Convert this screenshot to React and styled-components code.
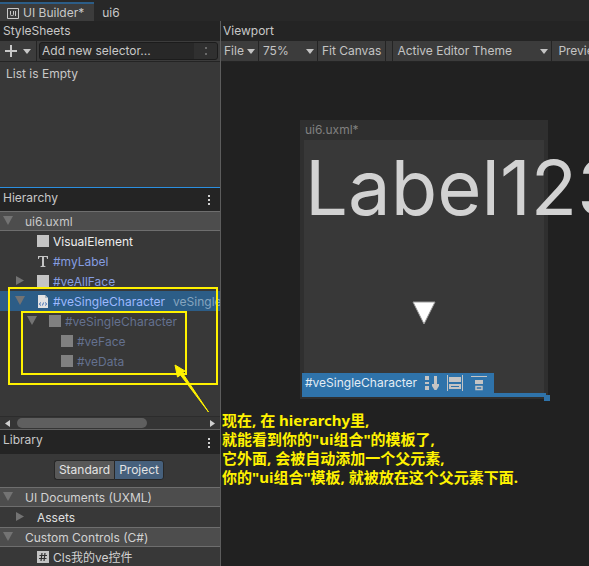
import React from "react";
import styled, { createGlobalStyle } from "styled-components";

const Global = createGlobalStyle`
  *, *::before, *::after { box-sizing: border-box; }
  body {
    margin: 0;
    background: #212121;
    color: #c8c8c8;
    font: 400 12px/20px Inter, "Noto Sans CJK SC", sans-serif;
    overflow: hidden;
  }
  button, input, select { font: inherit; color: inherit; margin: 0; padding: 0; border: 0; background: none; }
  ul { list-style: none; margin: 0; padding: 0; }
  svg { display: block; flex: none; }
`;

const Editor = styled.div`
  display: flex;
  flex-direction: column;
  height: 100vh;
`;

const TabBar = styled.div`
  display: flex;
  flex: 0 0 21px;
  line-height: 16px;
  background: #282828;
`;

const Tab = styled.button`
  display: flex;
  align-items: center;
  gap: 4px;
  line-height: 16px;
  padding: ${(p) => (p.$active ? "1px 10px 0 7px" : "5px 8px 0")};
  background: ${(p) => (p.$active ? "#3c3c3c" : "transparent")};
  border-top: ${(p) => (p.$active ? "2px solid #2c5d87" : "0")};
  margin-top: ${(p) => (p.$active ? "2px" : "0")};
`;

const Workspace = styled.div`
  display: flex;
  flex: 1;
  min-height: 0;
`;

const Sidebar = styled.aside`
  flex: 0 0 221px;
  display: grid;
  grid-template-rows: 167fr 242fr 136fr;
  min-height: 0;
  border-right: 1px solid #5c5c5c;
`;

const Pane = styled.section`
  display: flex;
  flex-direction: column;
  min-width: 0;
  min-height: 0;
  overflow: hidden;
  background: #383838;
  border-bottom: ${(p) => (p.$edge ? `1px solid ${p.$edge}` : "0")};
`;

const PaneHeader = styled.header`
  display: flex;
  justify-content: space-between;
  flex: 0 0 ${(p) => p.$height || 20}px;
  padding: 0 10px 0 ${(p) => p.$pad || 3}px;
  background: #242424;
`;

const PaneTitle = styled.h2`
  margin: 0;
  font: inherit;
`;

const IconButton = styled.button`
  display: flex;
  align-items: center;
  justify-content: center;
`;

const MenuButton = styled(IconButton)`
  padding-top: 1px;
`;

const Toolbar = styled.div`
  display: flex;
  flex: 0 0 21px;
  background: #3c3c3c;
  border-bottom: 1px solid #242424;
`;

const AddButton = styled(IconButton)`
  flex: 0 0 37px;
  gap: 6px;
  border-right: 1px solid #242424;
`;

const SelectorField = styled.div`
  display: flex;
  flex: 1;
  min-width: 0;
  margin: 1px 2px;
  background: #282828;
  border: 1px solid #1c1c1c;
  border-radius: 3px;
  overflow: hidden;
`;

const SelectorInput = styled.input`
  flex: 1;
  min-width: 0;
  padding-left: 2px;
  line-height: 16px;
  &::placeholder { color: #c8c8c8; opacity: 1; }
`;

const FieldMenu = styled(IconButton)`
  flex: 0 0 23px;
  background: #303030;
  color: #6a6a6a;
`;

const EmptyText = styled.p`
  margin: 0;
  padding: 2px 6px;
`;

const TreeArea = styled.div`
  position: relative;
  flex: 1;
  min-height: 0;
`;

const Tree = styled.ul``;

const TreeRow = styled.li`
  display: flex;
  align-items: center;
  height: 20px;
  padding-left: ${(p) => p.$depth * 12 + 3}px;
  line-height: 18px;
  white-space: nowrap;
  overflow: hidden;
  color: ${(p) => p.$color || "#d2d2d2"};
  background: ${(p) => (p.$head ? "#4d4d4d" : p.$selected ? "#2c5d87" : "transparent")};
  border: solid #6e6e6e;
  border-width: ${(p) => (p.$head ? "1px 0" : "0")};
`;

const RowText = styled.span`
  padding-top: 2px;
`;

const Toggle = styled(IconButton)`
  flex: 0 0 10px;
  height: 14px;
  margin-right: 12px;
  color: #737373;
`;

const ToggleGap = styled.span`
  flex: 0 0 22px;
`;

const NodeIcon = styled.span`
  display: flex;
  justify-content: center;
  flex: 0 0 12px;
  margin-right: 4px;
`;

const Swatch = styled.span`
  width: 12px;
  height: 12px;
  background: ${(p) => (p.$dim ? "#808080" : "#c4c4c4")};
`;

const Source = styled(RowText)`
  margin-left: 8px;
  color: #86a5bf;
`;

const ScrollBar = styled.div`
  display: flex;
  align-items: center;
  flex: 0 0 13px;
  padding: 0 5px;
  gap: 7px;
  background: #353535;
  border-top: 1px solid #2c2c2c;
`;

const ScrollTrack = styled.div`
  flex: 1;
`;

const ScrollThumb = styled.div`
  width: 70%;
  height: 10px;
  border-radius: 5px;
  background: #5f5f5f;
`;

const Segments = styled.div`
  display: flex;
  justify-content: center;
  padding: 6px 0 7px;
  margin-right: 2px;
  flex: none;
`;

const Segment = styled.button`
  height: 20px;
  padding: 0 4px;
  line-height: 18px;
  color: #e4e4e4;
  background: ${(p) => (p.$active ? "#46607c" : "#585858")};
  border: 1px solid #272727;
  border-radius: ${(p) => (p.$active ? "0 3px 3px 0" : "3px 0 0 3px")};
  border-right-width: ${(p) => (p.$active ? "1px" : "0")};
`;

const Callout = styled.div`
  position: absolute;
  left: ${(p) => p.$x}px;
  top: ${(p) => p.$y}px;
  width: ${(p) => p.$w}px;
  height: ${(p) => p.$h}px;
  border: 2px solid #fff200;
  pointer-events: none;
`;

const CalloutArrow = styled.svg`
  position: absolute;
  left: 172px;
  top: 152px;
  z-index: 1;
  pointer-events: none;
`;

const Viewport = styled.main`
  position: relative;
  display: flex;
  flex-direction: column;
  flex: 1;
  min-width: 0;
  overflow: hidden;
`;

const ViewBar = styled(Toolbar)`
  overflow: hidden;
  color: #c4c4c4;
`;

const ToolButton = styled.button`
  display: flex;
  align-items: center;
  flex: none;
  gap: 3px;
  padding: 0 ${(p) => p.$pad || 4}px;
  white-space: nowrap;
  border-right: 1px solid #242424;
`;

const ToolGap = styled.span`
  flex: 0 0 7px;
  border-right: 1px solid #242424;
`;

const SelectBox = styled.label`
  display: flex;
  align-items: center;
  flex: 0 0 ${(p) => p.$width}px;
  padding-right: 3px;
  border-right: 1px solid #242424;
`;

const Select = styled.select`
  appearance: none;
  flex: 1;
  min-width: 0;
  padding-left: 4px;
  outline: 0;
`;

const Stage = styled.div`
  flex: 1;
  padding: 58px 0 0 79px;
`;

const Document = styled.div`
  width: 248px;
  padding: 0 4px 5px;
  background: #2f2f2f;
`;

const DocumentTitle = styled.div`
  padding-left: 1px;
  color: #808080;
`;

const DocumentBody = styled.div`
  position: relative;
  display: flex;
  flex-direction: column;
  height: 254px;
  background: #383838;
`;

const BigLabel = styled.div`
  padding-left: 1px;
  font-size: 76px;
  line-height: 94px;
  white-space: nowrap;
  color: #d2d2d2;
`;

const Pointer = styled.svg`
  margin: 67px 0 0 108px;
`;

const Selection = styled.div`
  position: absolute;
  left: -2px;
  right: -2px;
  bottom: -3px;
  border-bottom: 4px solid #2f73aa;
`;

const SelectionTag = styled.div`
  display: flex;
  align-items: center;
  gap: 8px;
  width: 192px;
  height: 20px;
  padding-left: 3px;
  color: #e3edf5;
  background: #2f73aa;
`;

const Handle = styled.span`
  position: absolute;
  right: -4px;
  bottom: -8px;
  width: 6px;
  height: 6px;
  background: #2f73aa;
`;

const Note = styled.p`
  position: absolute;
  left: 1px;
  top: 390px;
  margin: 0;
  font: 700 15px/19px "Noto Sans", "Noto Sans CJK SC", sans-serif;
  white-space: nowrap;
  color: #fff200;
`;

const Down = () => (
  <svg width="8" height="5" viewBox="0 0 8 5">
    <path d="M0 0h8L4 5z" fill="currentColor" />
  </svg>
);

const Side = ({ flip }) => (
  <svg width="5" height="7" viewBox="0 0 5 7">
    <path d={flip ? "M5 0v7L0 3.5z" : "M0 0v7l5-3.5z"} fill="#d0d0d0" />
  </svg>
);

const Expander = ({ open, name }) => (
  <Toggle aria-label={`Toggle ${name}`} aria-expanded={open}>
    <svg width="10" height="10" viewBox="0 0 10 10">
      <path d={open ? "M0 0h10L5 9z" : "M1 0v9l8-4.5z"} fill="currentColor" />
    </svg>
  </Toggle>
);

const Dots = () => (
  <svg width="2" height="10" viewBox="0 0 2 10" fill="#d0d0d0">
    <path d="M0 0h2v2H0zM0 4h2v2H0zM0 8h2v2H0z" />
  </svg>
);

const TextIcon = () => (
  <svg width="10" height="11" viewBox="0 0 10 11">
    <path d="M0 0h10v3h-.8L8.500 1H6v8.800l1.500.5v.7h-5v-.7L4 9.800V1H1.500L.8 3H0z" fill="#c4c4c4" />
  </svg>
);

const FileIcon = () => (
  <svg width="10" height="13" viewBox="0 0 10 13">
    <path d="M0 0h7l3 3v10H0z" fill="#e2e2e2" />
    <path d="M7 0v3h3" fill="#aab6c0" />
    <path d="M3 7.500L1.200 9 3 10.500M7 7.500L8.800 9 7 10.500M5.600 7.500l-1.200 3" stroke="#3f6fb5" fill="none" />
  </svg>
);

const HashIcon = () => (
  <svg width="12" height="12" viewBox="0 0 12 12">
    <rect width="12" height="12" fill="#c4c4c4" />
    <path d="M5 2L4 10M8 2L7 10M2.500 4.500h7.500M2 7.500h7.500" stroke="#303030" strokeWidth="1.200" />
  </svg>
);

const BuilderIcon = () => (
  <svg width="12" height="11" viewBox="0 0 12 11" fill="none" stroke="#c8c8c8">
    <path d="M.5.5h11v10H.5z" />
    <path d="M3.500 3v3.500q0 1 1 1h1q1 0 1-1V3M8.500 3v5" />
  </svg>
);

const icons = {
  box: <Swatch />,
  dim: <Swatch $dim />,
  text: <TextIcon />,
  file: <FileIcon />,
  hash: <HashIcon />,
};

const BLUE = "#859de0";
const FADED = "#64718f";

const hierarchy = [
  { name: "ui6.uxml", depth: 0, open: true, head: true, color: "#c8c8c8" },
  { name: "VisualElement", depth: 1, icon: "box", color: "#eeeeee" },
  { name: "#myLabel", depth: 1, icon: "text", color: BLUE },
  { name: "#veAllFace", depth: 1, icon: "box", open: false, color: BLUE },
  { name: "#veSingleCharacter", depth: 1, icon: "file", open: true, selected: true, color: "#9db9ff", source: "veSingleCharacter" },
  { name: "#veSingleCharacter", depth: 2, icon: "dim", open: true, color: FADED },
  { name: "#veFace", depth: 3, icon: "dim", color: FADED },
  { name: "#veData", depth: 3, icon: "dim", color: FADED },
];

const library = [
  { name: "UI Documents (UXML)", depth: 0, open: true, head: true },
  { name: "Assets", depth: 1, open: false, color: "#e0e0e0" },
  { name: "Custom Controls (C#)", depth: 0, open: true, head: true },
  { name: "Cls我的ve控件", depth: 1, icon: "hash" },
];

const Rows = ({ items, label }) => (
  <Tree role="tree" aria-label={label}>
    {items.map((r, i) => (
      <TreeRow key={i} role="treeitem" $depth={r.depth} $head={r.head} $selected={r.selected} $color={r.color}>
        {r.open === undefined ? <ToggleGap /> : <Expander open={r.open} name={r.name} />}
        {r.icon && <NodeIcon>{icons[r.icon]}</NodeIcon>}
        <RowText>{r.name}</RowText>
        {r.source && <Source>{r.source}</Source>}
      </TreeRow>
    ))}
  </Tree>
);

export default function App() {
  return (
    <Editor>
      <Global />
      <TabBar>
        <Tab $active>
          <BuilderIcon />
          UI Builder*
        </Tab>
        <Tab>ui6</Tab>
      </TabBar>
      <Workspace>
        <Sidebar>
          <Pane $edge="#2b8fe0">
            <PaneHeader>
              <PaneTitle>StyleSheets</PaneTitle>
            </PaneHeader>
            <Toolbar>
              <AddButton aria-label="Add style sheet">
                <svg width="12" height="12" viewBox="0 0 12 12">
                  <path d="M5 0h2v5h5v2H7v5H5V7H0V5h5z" fill="#c8c8c8" />
                </svg>
                <Down />
              </AddButton>
              <SelectorField>
                <SelectorInput aria-label="Add new selector" placeholder="Add new selector..." />
                <FieldMenu aria-label="Selector options">
                  <svg width="2" height="8" viewBox="0 0 2 8">
                    <path d="M0 0h2v2H0zM0 6h2v2H0z" fill="currentColor" />
                  </svg>
                </FieldMenu>
              </SelectorField>
            </Toolbar>
            <EmptyText>List is Empty</EmptyText>
          </Pane>
          <Pane $edge="#606060">
            <PaneHeader $height={23}>
              <PaneTitle>Hierarchy</PaneTitle>
              <MenuButton aria-label="Hierarchy menu">
                <Dots />
              </MenuButton>
            </PaneHeader>
            <TreeArea>
              <Rows items={hierarchy} label="Hierarchy" />
              <Callout $x={8} $y={76} $w={210} $h={98} />
              <Callout $x={21} $y={100} $w={166} $h={64} />
              <CalloutArrow width="38" height="52" viewBox="0 0 38 52">
                <path d="M3 2L13 8 10.500 10 36.500 49 8.500 12 5.500 14z" fill="#fff200" stroke="#fff200" />
              </CalloutArrow>
            </TreeArea>
            <ScrollBar>
              <IconButton aria-label="Scroll left">
                <Side flip />
              </IconButton>
              <ScrollTrack>
                <ScrollThumb />
              </ScrollTrack>
              <IconButton aria-label="Scroll right">
                <Side />
              </IconButton>
            </ScrollBar>
          </Pane>
          <Pane>
            <PaneHeader $height={24}>
              <PaneTitle>Library</PaneTitle>
              <MenuButton aria-label="Library menu">
                <Dots />
              </MenuButton>
            </PaneHeader>
            <Segments>
              <Segment>Standard</Segment>
              <Segment $active aria-pressed="true">
                Project
              </Segment>
            </Segments>
            <Rows items={library} label="Library" />
          </Pane>
        </Sidebar>
        <Viewport>
          <PaneHeader $pad={2}>
            <PaneTitle>Viewport</PaneTitle>
          </PaneHeader>
          <ViewBar>
            <ToolButton $pad={3}>
              File
              <Down />
            </ToolButton>
            <SelectBox $width={59}>
              <Select aria-label="Zoom">
                <option>75%</option>
              </Select>
              <Down />
            </SelectBox>
            <ToolButton>Fit Canvas</ToolButton>
            <ToolGap />
            <SelectBox $width={159}>
              <Select aria-label="Theme">
                <option>Active Editor Theme</option>
              </Select>
              <Down />
            </SelectBox>
            <ToolButton $pad={6}>Preview</ToolButton>
          </ViewBar>
          <Stage>
            <Document>
              <DocumentTitle>ui6.uxml*</DocumentTitle>
              <DocumentBody>
                <BigLabel>Label123</BigLabel>
                <Pointer width="24" height="24" viewBox="0 0 24 24">
                  <path d="M1 1h22L12 23z" fill="#fff" stroke="#999" />
                </Pointer>
                <Selection>
                  <SelectionTag>
                    <span>#veSingleCharacter</span>
                    <svg width="14" height="14" viewBox="0 0 14 14" fill="#c4c4c4">
                      <path d="M0 0h4v4H0zM0 6h4v2H0zM0 10h4v4H0zM9 0h3v8h2v2l-2.500 4h-2L7 10V8h2z" />
                    </svg>
                    <svg width="16" height="16" viewBox="0 0 16 16" fill="#c4c4c4">
                      <path d="M0 0h1v16H0zM15 0h1v16h-1zM2 2h12v5H2z" />
                      <path d="M3 10h10v3H3z" fill="none" stroke="#c4c4c4" strokeWidth="2" />
                    </svg>
                    <svg width="16" height="16" viewBox="0 0 16 16" fill="#c4c4c4">
                      <path d="M0 1h16v1H0zM4 5h8v4H4z" />
                      <path d="M5 11.500h6v3H5z" fill="none" stroke="#c4c4c4" strokeWidth="1.500" />
                    </svg>
                  </SelectionTag>
                  <Handle />
                </Selection>
              </DocumentBody>
            </Document>
          </Stage>
          <Note>
            现在, 在 hierarchy里,
            <br />
            就能看到你的"ui组合"的模板了,
            <br />
            它外面, 会被自动添加一个父元素,
            <br />
            你的"ui组合"模板, 就被放在这个父元素下面.
          </Note>
        </Viewport>
      </Workspace>
    </Editor>
  );
}
